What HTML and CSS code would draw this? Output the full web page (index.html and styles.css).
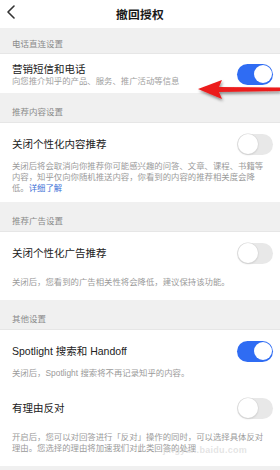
FILE: index.html
```html
<!DOCTYPE html>
<html lang="zh-CN">
<head>
<meta charset="utf-8">
<title>撤回授权</title>
<link rel="stylesheet" href="styles.css">
</head>
<body>
<div class="page">
  <header class="topbar">
    <svg class="back" width="10" height="14" viewBox="0 0 10 14"><polyline points="8,1 2,7 8,13" fill="none" stroke="#333" stroke-width="1.6" stroke-linecap="round" stroke-linejoin="round"/></svg>
    <h1 class="title">撤回授权</h1>
  </header>

  <div class="sec sec--first">电话直连设置</div>
  <div class="item item--sub">
    <div class="item-text">
      <div class="item-title">营销短信和电话</div>
      <div class="item-sub">向您推介知乎的产品、服务、推广活动等信息</div>
    </div>
    <span class="switch on"></span>
  </div>

  <div class="sec">推荐内容设置</div>
  <div class="item item--tight">
    <div class="row"><span class="item-title">关闭个性化内容推荐</span><span class="switch"></span></div>
    <p class="desc">关闭后将会取消向你推荐你可能感兴趣的问答、文章、课程、书籍等内容，知乎仅向你随机推送内容，你看到的内容的推荐相关度会降低。<a class="link">详细了解</a></p>
  </div>

  <div class="sec">推荐广告设置</div>
  <div class="item item--loose">
    <div class="row"><span class="item-title">关闭个性化广告推荐</span><span class="switch"></span></div>
    <p class="desc">关闭后，您看到的广告相关性将会降低，建议保持该功能。</p>
  </div>

  <div class="sec">其他设置</div>
  <div class="item item--tight">
    <div class="row"><span class="item-title">Spotlight 搜索和 Handoff</span><span class="switch on"></span></div>
    <p class="desc">关闭后，Spotlight 搜索将不再记录知乎的内容。</p>
  </div>
  <div class="item item--loose">
    <div class="row"><span class="item-title">有理由反对</span><span class="switch"></span></div>
    <p class="desc">开启后，您可以对回答进行「反对」操作的同时，可以选择具体反对理由。您选择的理由将加速我们对此类回答的处理</p>
  </div>
  <div class="foot"></div>

  <svg class="arrow" width="90" height="30" viewBox="190 76 90 30">
    <defs>
      <filter id="sh" x="-20%" y="-50%" width="140%" height="200%">
        <feDropShadow dx="1" dy="2" stdDeviation="1.5" flood-color="#000" flood-opacity="0.45"/>
      </filter>
    </defs>
    <polygon points="198,89 222,80 219,87 280,87.5 280,91 219,92 222,99" fill="#ec1c1c" filter="url(#sh)"/>
  </svg>
  <div class="watermark">jingyan.baidu.com</div>
</div>
</body>
</html>
```

FILE: styles.css
```css
* { box-sizing: border-box; }
html, body { margin: 0; padding: 0; }
body {
  background: #f0f0f0;
  font-family: "Liberation Sans", "Noto Sans CJK SC", sans-serif;
  width: 280px;
  height: 470px;
  overflow: hidden;
}
.page {
  position: relative;
  width: 280px;
  height: 470px;
  background: #f0f0f0;
}
.topbar {
  position: relative;
  height: 28px;
  background: #fff;
  display: flex;
  align-items: center;
  justify-content: center;
  padding-bottom: 2px;
}
.back {
  position: absolute;
  left: 6px;
  top: 5px;
}
.title {
  margin: 0;
  font-size: 11.8px;
  font-weight: 600;
  color: #1a1a1a;
  letter-spacing: 0.2px;
}
.sec {
  height: 30px;
  padding: 0 12px 4px;
  display: flex;
  align-items: flex-end;
  font-size: 8.5px;
  line-height: 11px;
  color: #8a8a8a;
  background: #f0f0f0;
  border-bottom: 1px solid #e6e6e6;
}
.sec--first { height: 26px; padding-bottom: 3px; }
.item {
  background: #fff;
  padding: 10px 7px 8px 12px;
}
.item--sub {
  height: 39px;
  padding: 8px 7px 7px 12px;
  display: flex;
  align-items: center;
  justify-content: space-between;
}
.item--loose { padding-bottom: 12px; }
.item-text { display: flex; flex-direction: column; }
.item-title {
  font-size: 10.5px;
  line-height: 13px;
  color: #222;
}
.item-sub {
  font-size: 8.4px;
  line-height: 10px;
  color: #a0a0a0;
}
.row {
  height: 22px;
  display: flex;
  align-items: center;
  justify-content: space-between;
}
.desc {
  margin: 6px 5px 0 0;
  font-size: 8.4px;
  line-height: 11px;
  color: #9a9a9a;
}
.item--loose .desc { margin-top: 13px; }
.link { color: #3b6fd6; }
.switch {
  position: relative;
  flex: none;
  width: 36px;
  height: 21px;
  border-radius: 11px;
  background: #e8e8e8;
}
.switch::after {
  content: "";
  position: absolute;
  left: 0.5px;
  top: 0.5px;
  width: 20px;
  height: 20px;
  border-radius: 50%;
  background: #fff;
  box-shadow: 0 0 0 0.6px #d8d8d8, 0 1px 2px rgba(0,0,0,0.15);
}
.switch.on { background: #2f6cf3; }
.switch.on::after {
  left: auto;
  right: 1.5px;
  top: 1.5px;
  width: 18px;
  height: 18px;
  box-shadow: none;
}
.foot { height: 4px; }
.arrow {
  position: absolute;
  left: 190px;
  top: 76px;
}
.watermark {
  position: absolute;
  left: 163px;
  top: 445px;
  font-size: 9px;
  font-weight: 700;
  color: rgba(205,205,205,0.55);
  letter-spacing: 0.3px;
}
```
